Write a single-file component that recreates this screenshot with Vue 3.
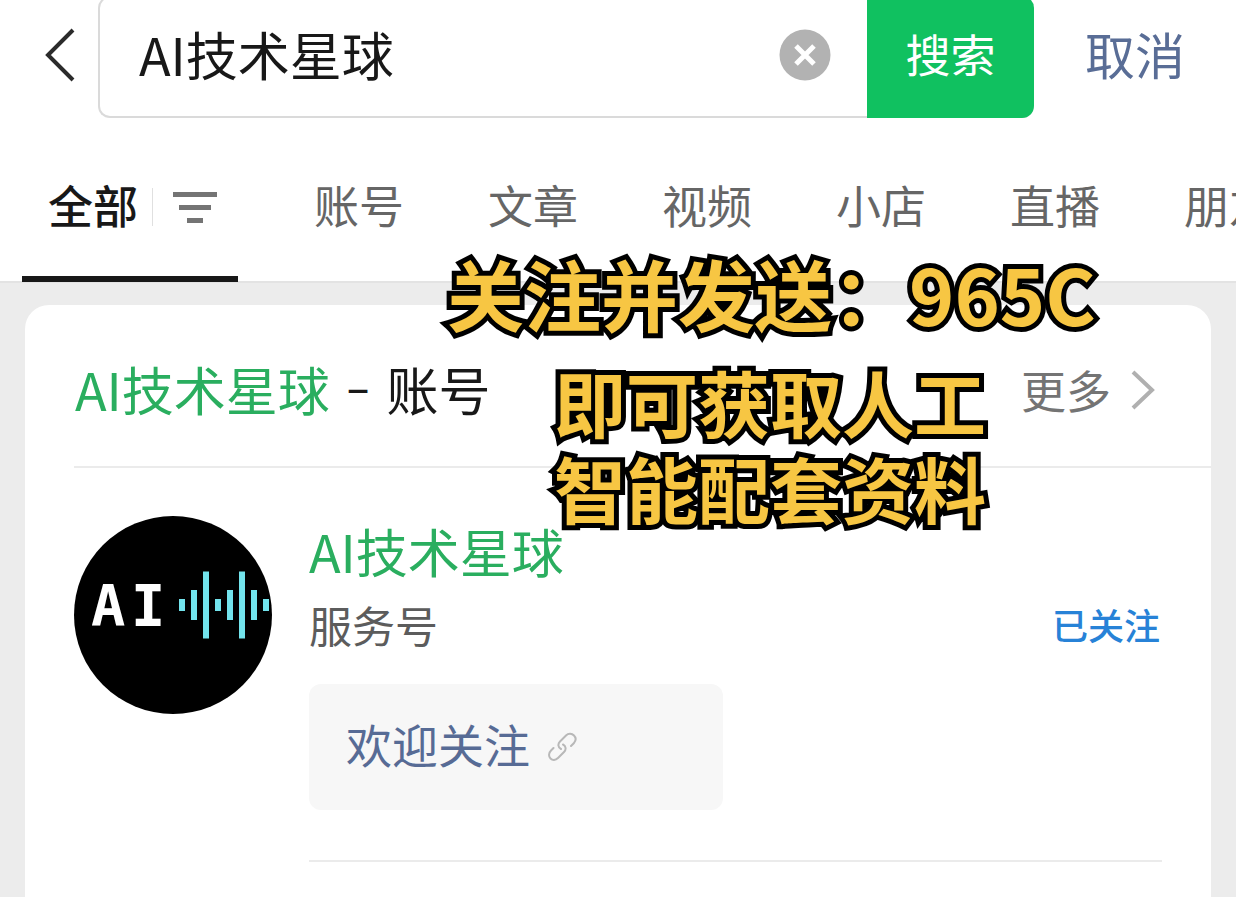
<script setup>
import { ref } from 'vue'

const query = ref('AI技术星球')
const tabs = ['账号', '文章', '视频', '小店', '直播', '朋友圈']
const bars = [
  { x: 105, h: 12 },
  { x: 117, h: 30 },
  { x: 129, h: 67 },
  { x: 141, h: 12 },
  { x: 153, h: 30 },
  { x: 165, h: 67 },
  { x: 177, h: 30 },
  { x: 189, h: 12 },
]
</script>

<template>
  <div class="page">
    <header class="topbar">
      <button class="back" type="button" aria-label="返回">
        <svg width="32" height="54" viewBox="0 0 32 54" fill="none" stroke="#2b2b2b" stroke-width="4">
          <path d="M29 2 4 27l25 25" />
        </svg>
      </button>
      <form class="search" @submit.prevent>
        <input v-model="query" class="field" type="text" aria-label="搜索内容" />
        <button class="clear" type="button" aria-label="清除" @click="query = ''">
          <svg width="52" height="52" viewBox="0 0 52 52">
            <circle cx="26" cy="26" r="25.5" fill="#b2b2b2" />
            <path d="M17 17l18 18M35 17 17 35" stroke="#fff" stroke-width="5" />
          </svg>
        </button>
        <button class="submit" type="submit">搜索</button>
      </form>
      <button class="cancel" type="button">取消</button>
    </header>

    <nav class="tabs">
      <button class="tab active" type="button">
        <span>全部</span>
        <i class="divider"></i>
        <svg width="44" height="34" viewBox="0 0 44 34" fill="#747474">
          <path d="M0 2h44v5H0zM6 15h32v5H6zM14 28h16v5H14z" />
        </svg>
      </button>
      <button v-for="tab in tabs" :key="tab" class="tab" type="button">{{ tab }}</button>
    </nav>

    <main class="results">
      <section class="card">
        <div class="card-head">
          <h2 class="title"><em>AI技术星球</em><span class="dash">–</span><span>账号</span></h2>
          <a class="more" href="#">
            更多
            <svg width="24" height="40" viewBox="0 0 24 40" fill="none" stroke="#b0b0b0" stroke-width="4">
              <path d="M2 2l19 18L2 38" />
            </svg>
          </a>
        </div>

        <article class="account">
          <svg class="avatar" viewBox="0 0 198 198" role="img" aria-label="AI">
            <defs>
              <clipPath id="disc"><circle cx="99" cy="99" r="99" /></clipPath>
            </defs>
            <g clip-path="url(#disc)">
              <rect width="198" height="198" />
              <text class="logo-text" x="17 57" y="110">AI</text>
              <rect v-for="bar in bars" :key="bar.x" :x="bar.x" :y="89 - bar.h / 2" width="6" :height="bar.h" fill="#72e3ec" />
            </g>
          </svg>
          <div class="info">
            <div class="summary">
              <div>
                <h3 class="name">AI技术星球</h3>
                <p class="kind">服务号</p>
              </div>
              <button class="followed" type="button">已关注</button>
            </div>
            <a class="welcome" href="#">
              <span>欢迎关注</span>
              <svg width="30" height="30" viewBox="0 0 30 30" fill="none" stroke="#b8b8b8" stroke-width="2" stroke-linecap="round">
                <path d="M13 17C10 15.500 9.500 12 12 9.500L18 3.500C20.500 1 24 1.500 26 3.500C28 5.500 28 8.500 26 11L23 14" />
                <path d="M15 12.500C18 14 18.500 17.500 16 20L10 26C7.500 28.500 4.500 28.500 2.500 26.500C.5 24.500 .5 21 3 18.500L5.500 16" />
              </svg>
            </a>
          </div>
        </article>
      </section>
    </main>

    <aside class="caption">
      <p class="line-main">关注并发送：965C</p>
      <p class="line-sub">即可获取人工<br />智能配套资料</p>
    </aside>
  </div>
</template>

<style>
body {
  margin: 0;
  background: #ececec;
}
</style>

<style scoped>
.page {
  position: relative;
  display: flex;
  flex-direction: column;
  height: 100vh;
  overflow: hidden;
  color: #181818;
  font-family: "Noto Sans CJK SC", sans-serif;
}
button {
  padding: 0;
  border: 0;
  background: none;
  color: inherit;
  font: inherit;
}
a {
  color: inherit;
  text-decoration: none;
}
h2, h3, p {
  margin: 0;
  font-weight: 400;
}
svg {
  display: block;
  flex: none;
}
.topbar {
  display: flex;
  flex: none;
  height: 122px;
  margin-top: -4px;
  background: #fff;
}
.back {
  display: flex;
  align-items: center;
  width: 98px;
  padding: 0 0 4px 44px;
}
.search {
  display: flex;
  flex: 1;
  min-width: 0;
  align-items: center;
  box-sizing: border-box;
  border: 2px solid #dadada;
  border-right: 0;
  border-radius: 12px;
}
.field {
  flex: 1;
  min-width: 0;
  height: 80px;
  padding: 0 0 8px 39px;
  border: 0;
  outline: 0;
  background: none;
  color: #181818;
  font: 400 52px/72px "Noto Sans CJK SC", sans-serif;
}
.clear {
  margin-right: 36px;
  padding-bottom: 4px;
}
.submit {
  align-self: stretch;
  width: 167px;
  margin: -2px 0;
  padding-bottom: 8px;
  border-radius: 0 12px 12px 0;
  background: #10c160;
  color: #fff;
  font-size: 45px;
}
.cancel {
  padding: 0 51px 8px;
  color: #596d96;
  font-size: 50px;
}
.tabs {
  display: flex;
  flex: none;
  height: 163px;
  padding-left: 22px;
  border-bottom: 2px solid #e3e3e3;
  background: #fff;
}
.tab {
  flex: none;
  box-sizing: border-box;
  height: 164px;
  padding: 0 42px;
  color: #666;
  font-size: 45px;
  line-height: 174px;
  text-align: left;
  white-space: nowrap;
  display: flex;
}
.tab.active {
  align-items: center;
  margin-right: 34px;
  padding: 20px 21px 0 26px;
  border-bottom: 6px solid #181818;
  color: #181818;
  font-weight: 500;
  line-height: 64px;
}
.tab.active span {
  padding-bottom: 4px;
}
.divider {
  width: 1px;
  height: 38px;
  margin: 0 20px 0 14px;
  background: #e0e0e0;
}
.results {
  display: flex;
  flex: 1;
  min-height: 0;
  padding: 22px 25px 0;
}
.card {
  flex: 1;
  min-width: 0;
  border-radius: 24px 24px 0 0;
  background: #fff;
}
.card-head {
  display: flex;
  align-items: center;
  justify-content: space-between;
  height: 161px;
  margin-left: 49px;
  padding-right: 56px;
  border-bottom: 2px solid #ebebeb;
}
.title {
  display: flex;
  align-items: center;
  gap: 17px;
  font-size: 52px;
  line-height: 72px;
  padding: 6px 0 0 1px;
}
.title em {
  color: #2aae5f;
  font-style: normal;
}
.dash {
  padding-bottom: 8px;
  font-size: 42px;
  font-weight: 500;
}
.more {
  display: flex;
  align-items: center;
  gap: 20px;
  padding-top: 8px;
  color: #747474;
  font-size: 45px;
  line-height: 64px;
}
.account {
  display: flex;
  align-items: flex-start;
  gap: 37px;
  padding: 48px 49px 0 49px;
}
.avatar {
  width: 198px;
  height: 198px;
}
.logo-text {
  fill: #fff;
  font: 700 57px "DejaVu Sans Mono", monospace;
}
.info {
  flex: 1;
  min-width: 0;
  padding-bottom: 50px;
  border-bottom: 2px solid #ebebeb;
}
.summary {
  display: flex;
  align-items: flex-end;
  justify-content: space-between;
}
.name {
  color: #2aae5f;
  font-size: 52px;
  line-height: 70px;
}
.kind {
  color: #5c5c5c;
  font-size: 43px;
  line-height: 76px;
}
.followed {
  padding-right: 2px;
  color: #2782d7;
  font-size: 36px;
  font-weight: 500;
  line-height: 76px;
}
.welcome {
  display: flex;
  align-items: center;
  gap: 18px;
  box-sizing: border-box;
  width: 414px;
  max-width: 100%;
  height: 126px;
  margin-top: 22px;
  padding-left: 37px;
  border-radius: 12px;
  background: #f7f7f7;
  color: #576b95;
  font-size: 46px;
}
.welcome span {
  padding-bottom: 8px;
}
.caption {
  position: absolute;
  top: 250px;
  left: 447px;
  color: #f7c643;
  white-space: nowrap;
  pointer-events: none;
  -webkit-text-stroke: 10px #000;
  paint-order: stroke fill;
}
.caption p {
  font-weight: 700;
}
.line-main {
  font-size: 77px;
  line-height: 86px;
}
.caption .line-sub {
  margin: 22px 0 0 107px;
  font-size: 72px;
  line-height: 86px;
}
</style>
